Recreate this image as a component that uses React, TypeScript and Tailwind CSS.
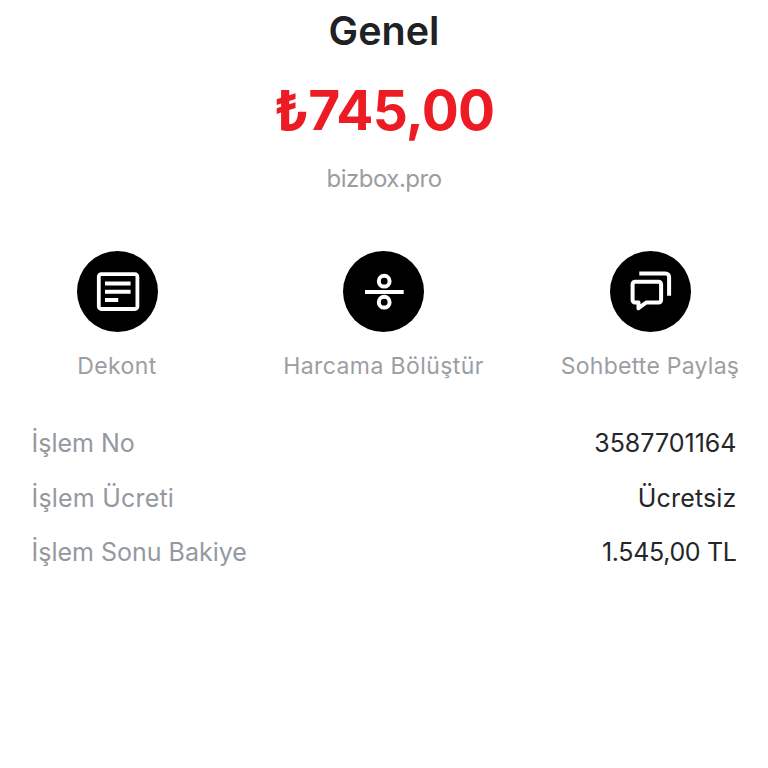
import type { ReactNode } from "react";

const ACTIONS: { label: string; labelClass: string; icon: ReactNode }[] = [
  {
    label: "Dekont",
    labelClass: "tracking-[0.4px]",
    icon: (
      <>
        <rect x="21.8" y="23.2" width="38.6" height="34.8" rx="2.5" strokeWidth="3.8" />
        <path d="M28 32.4h25.6M28 40.8h25.6M28 49h13.2" />
      </>
    ),
  },
  {
    label: "Harcama Bölüştür",
    labelClass: "tracking-[0.4px]",
    icon: (
      <>
        <circle cx="41.2" cy="30.2" r="5.4" />
        <path d="M22 41h38.7" />
        <circle cx="41.2" cy="51.2" r="5.4" />
      </>
    ),
  },
  {
    label: "Sohbette Paylaş",
    labelClass: "tracking-[0.25px]",
    icon: (
      <>
        <path d="M29.3 22.4h26.2a3.6 3.6 0 0 1 3.6 3.6v18.7" />
        <path d="M25 30.7h23.7a2.4 2.4 0 0 1 2.4 2.4v16a2.4 2.4 0 0 1-2.4 2.4H36.3L28.5 57.2v-5.7H25a2.4 2.4 0 0 1-2.4-2.4v-16a2.4 2.4 0 0 1 2.4-2.4z" />
      </>
    ),
  },
];

const DETAILS = [
  { label: "İşlem No", value: "3587701164", labelClass: "", valueClass: "" },
  { label: "İşlem Ücreti", value: "Ücretsiz", labelClass: "tracking-[0.2px]", valueClass: "tracking-[0.15px]" },
  { label: "İşlem Sonu Bakiye", value: "1.545,00 TL", labelClass: "", valueClass: "tracking-[-0.35px]" },
];

const App = () => {
  return (
    <main className="flex min-h-screen flex-col bg-white font-['Inter','Liberation_Sans',sans-serif]">
      <header className="flex flex-col items-center whitespace-nowrap">
        <h1 className="mt-[3px] text-[39.5px] leading-[56px] font-semibold text-[#202124]">
          Genel
        </h1>
        <p className="mt-[15px] text-[55px] leading-[72px] font-bold tracking-[-0.8px] text-[#ed1c24]">
          ₺745,00
        </p>
        <p className="mt-[17px] text-2xl tracking-[-0.5px] text-[#9b9da1]">bizbox.pro</p>
      </header>

      <section className="mt-14 flex justify-between pr-[17px] pl-4">
        {ACTIONS.map((action) => (
          <button key={action.label} className="flex w-[202px] flex-col items-center">
            <span className="flex h-[81px] w-[81px] rounded-full bg-black">
              <svg
                viewBox="0 0 81 81"
                className="h-full w-full"
                fill="none"
                stroke="white"
                strokeWidth="4"
                strokeLinejoin="round"
              >
                {action.icon}
              </svg>
            </span>
            <span
              className={`mt-[18px] text-[23px] leading-8 whitespace-nowrap text-[#9b9ea3] ${action.labelClass}`}
            >
              {action.label}
            </span>
          </button>
        ))}
      </section>

      <dl className="mt-[34px] flex flex-col px-[31.5px] text-[25px] leading-[54.5px] whitespace-nowrap">
        {DETAILS.map((row) => (
          <div key={row.label} className="flex justify-between">
            <dt className={`text-[#94999f] ${row.labelClass}`}>{row.label}</dt>
            <dd className={`text-[#25262a] ${row.valueClass}`}>{row.value}</dd>
          </div>
        ))}
      </dl>
    </main>
  );
};

export default App;
